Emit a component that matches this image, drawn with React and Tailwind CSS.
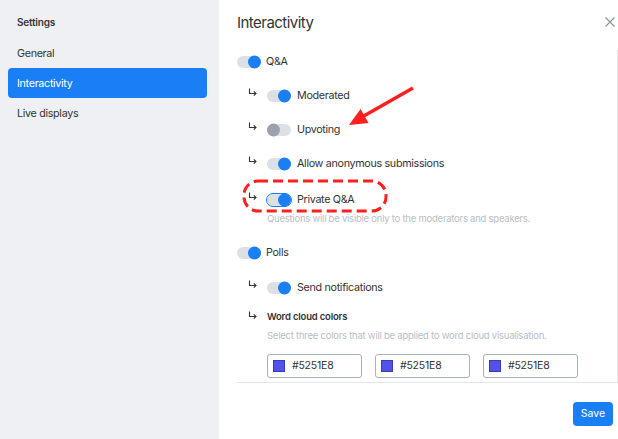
import { useState } from 'react'

const FONT = { fontFamily: 'Inter, "Noto Sans", sans-serif' }

function Toggle({ on, focused }) {
  return (
    <span
      className={`relative inline-flex w-[24px] h-[12px] shrink-0 rounded-full bg-[#dde1e6] ${
        focused ? 'outline outline-[1.5px] outline-[#1a7ff5] outline-offset-[0.5px]' : ''
      }`}
    >
      <span
        className={`absolute top-1/2 -translate-y-1/2 w-[13px] h-[13px] rounded-full ${
          on ? 'right-0 bg-[#1a7ff5]' : 'left-0 bg-[#9aa3ad]'
        }`}
      />
    </span>
  )
}

function SubArrow({ className = '' }) {
  return (
    <svg width="9" height="9" viewBox="0 0 9 9" className={`shrink-0 ${className}`} fill="none" stroke="#333" strokeWidth="1.1">
      <path d="M1.5 0.5 V5.5 H8" />
      <path d="M5.8 3.3 L8 5.5 L5.8 7.7" />
    </svg>
  )
}

function MainRow({ on, label, className = '' }) {
  return (
    <div className={`flex items-center h-[24px] ${className}`}>
      <Toggle on={on} />
      <span className="ml-[5px] text-[10.75px] tracking-[-0.03em] text-[#333]">{label}</span>
    </div>
  )
}

function SubRow({ on, label, focused, className = '' }) {
  return (
    <div className={`flex items-center h-[24px] pl-[11px] ${className}`}>
      <SubArrow className="-mt-[7px] mr-[10px]" />
      <Toggle on={on} focused={focused} />
      <span className="ml-[6px] text-[10.75px] tracking-[-0.03em] text-[#333]">{label}</span>
    </div>
  )
}

function ColorField({ value }) {
  return (
    <div className="flex items-center w-[95px] h-[24px] rounded-[3px] border border-[#a8b0ba] pl-[5px]">
      <span className="w-[12px] h-[12px] bg-[#5251E8] border border-[#3a39b8]" />
      <span className="ml-[7px] text-[10.5px] tracking-[-0.02em] text-[#333]">{value}</span>
    </div>
  )
}

export default function App() {
  const [active, setActive] = useState('Interactivity')
  const items = ['General', 'Interactivity', 'Live displays']

  return (
    <div className="relative flex w-[618px] h-[439px] bg-white overflow-hidden" style={FONT}>
      {/* Sidebar */}
      <aside className="w-[219px] h-full bg-[#eff0f3] pl-2 pr-3 pt-[15px]">
        <div className="px-[9px] h-[15px] flex items-center text-[10px] font-semibold tracking-[-0.02em] text-[#333]">Settings</div>
        <nav className="mt-[8px] flex flex-col">
          {items.map((it) => (
            <button
              key={it}
              onClick={() => setActive(it)}
              className={`h-[30px] rounded-[4px] pl-[9px] pt-[3px] text-left text-[10.75px] tracking-[-0.03em] ${
                active === it ? 'bg-[#1a7ff5] text-white' : 'text-[#333]'
              }`}
            >
              {it}
            </button>
          ))}
        </nav>
      </aside>

      {/* Main panel */}
      <main className="flex-1 flex flex-col">
        <header className="flex items-center justify-between h-[50px] pl-[18px] pr-[3px] pb-[4px]">
          <h1 className="text-[15px] tracking-[-0.035em] text-[#333]">Interactivity</h1>
          <svg width="10" height="10" viewBox="0 0 10 10" stroke="#8a929c" strokeWidth="1.2" className="-mt-[2px]">
            <path d="M0.5 0.5 L9.5 9.5 M9.5 0.5 L0.5 9.5" />
          </svg>
        </header>

        <section className="ml-[18px] h-[333px] border-r border-b border-[#e3e6ea] flex flex-col">
          <MainRow on label="Q&A" />
          <SubRow on label="Moderated" className="mt-[10px]" />
          <SubRow on={false} label="Upvoting" className="mt-[10px]" />
          <SubRow on label="Allow anonymous submissions" className="mt-[10px]" />
          <SubRow on focused label="Private Q&A" className="mt-[12px]" />
          <p className="pl-[30px] mt-[1px] h-[12px] leading-[12px] text-[9.5px] tracking-[-0.025em] text-[#b8bec6]">
            Questions will be visible only to the moderators and speakers.
          </p>

          <MainRow on label="Polls" className="mt-[16px]" />
          <SubRow on label="Send notifications" className="mt-[11px]" />

          <div className="flex items-center h-[14px] mt-[10px] pl-[11px]">
            <SubArrow className="-mt-[4px] mr-[10px]" />
            <span className="text-[9.5px] font-semibold tracking-[-0.02em] text-[#333]">Word cloud colors</span>
          </div>
          <p className="pl-[30px] mt-[6px] h-[12px] leading-[12px] text-[9.5px] tracking-[-0.025em] text-[#b8bec6]">
            Select three colors that will be applied to word cloud visualisation.
          </p>
          <div className="flex gap-[13px] pl-[30px] mt-[12px]">
            <ColorField value="#5251E8" />
            <ColorField value="#5251E8" />
            <ColorField value="#5251E8" />
          </div>
        </section>

        <footer className="flex justify-end pt-[19px] pr-[5px]">
          <button className="h-[24px] w-[40px] rounded-[4px] bg-[#1a7ff5] text-white text-[10.5px]">Save</button>
        </footer>
      </main>

      {/* Annotation overlay */}
      <svg className="absolute inset-0 pointer-events-none" width="618" height="439" viewBox="0 0 618 439">
        <rect x="244" y="181" width="142" height="30" rx="14" fill="none" stroke="#fe1f1f" strokeWidth="3" strokeDasharray="10 5" />
        <line x1="413" y1="88" x2="362" y2="117" stroke="#fe1f1f" strokeWidth="3.5" />
        <polygon points="349,125 368.6,122.9 360.6,109.1" fill="#fe1f1f" />
      </svg>
    </div>
  )
}
